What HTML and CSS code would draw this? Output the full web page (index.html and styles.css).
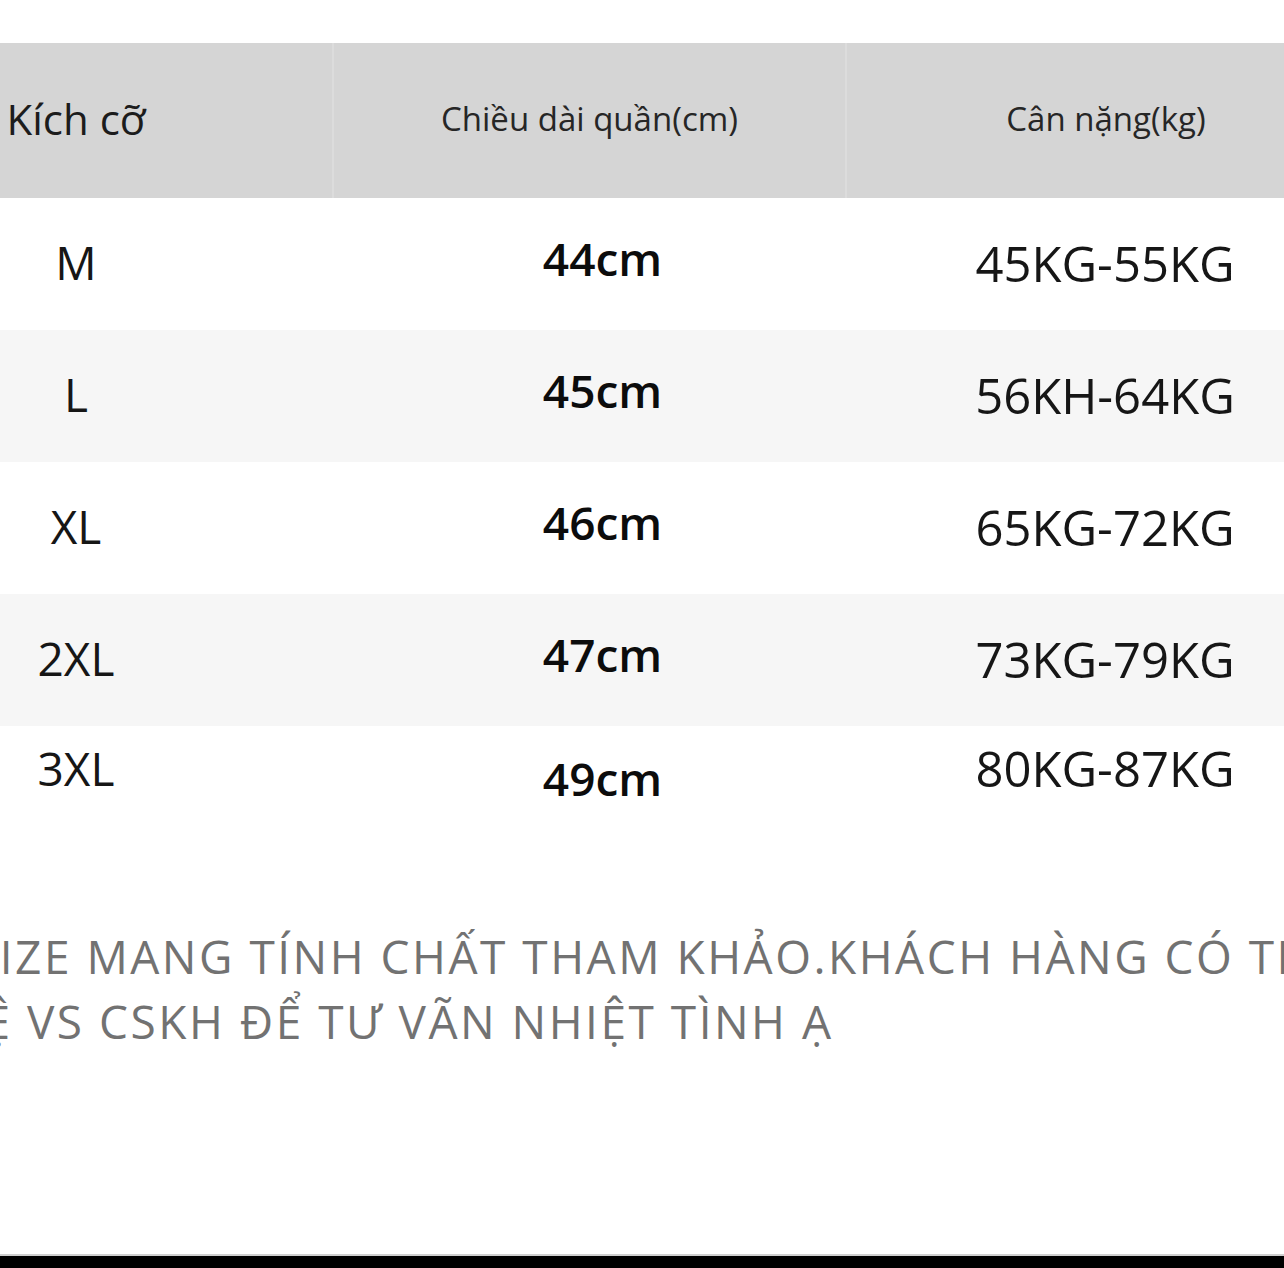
FILE: index.html
```html
<!DOCTYPE html>
<html lang="vi">
<head>
<meta charset="utf-8">
<title>Bảng size</title>
<link rel="stylesheet" href="styles.css">
</head>
<body>
<div class="page">
  <div class="table-clip">
    <div class="table">
      <div class="row head">
        <div class="cell c1 h-main">Kích cỡ</div>
        <div class="cell c2 h-sub">Chiều dài quần(cm)</div>
        <div class="cell c3 h-sub">Cân nặng(kg)</div>
      </div>
      <div class="row">
        <div class="cell c1 size">M</div>
        <div class="cell c2 len">44cm</div>
        <div class="cell c3 kg">45KG-55KG</div>
      </div>
      <div class="row alt">
        <div class="cell c1 size">L</div>
        <div class="cell c2 len">45cm</div>
        <div class="cell c3 kg">56KH-64KG</div>
      </div>
      <div class="row">
        <div class="cell c1 size">XL</div>
        <div class="cell c2 len">46cm</div>
        <div class="cell c3 kg">65KG-72KG</div>
      </div>
      <div class="row alt">
        <div class="cell c1 size">2XL</div>
        <div class="cell c2 len">47cm</div>
        <div class="cell c3 kg">73KG-79KG</div>
      </div>
      <div class="row last">
        <div class="cell c1 size up">3XL</div>
        <div class="cell c2 len down">49cm</div>
        <div class="cell c3 kg up">80KG-87KG</div>
      </div>
    </div>
  </div>
  <div class="note">
    <div class="note-line l1">SIZE MANG TÍNH CHẤT THAM KHẢO.KHÁCH HÀNG CÓ THỂ LIÊN</div>
    <div class="note-line l2">HỆ VS CSKH ĐỂ TƯ VÃN NHIỆT TÌNH Ạ</div>
  </div>
  <div class="bottom-bar"></div>
</div>
</body>
</html>
```
FILE: styles.css
```css
html, body {
  margin: 0;
  padding: 0;
  background: #ffffff;
}

.page {
  width: 1284px;
  height: 1268px;
  display: flex;
  flex-direction: column;
  overflow: hidden;
  font-family: "Open Sans", "Noto Sans", "Liberation Sans", sans-serif;
  color: #141414;
}

.table-clip {
  margin-top: 43px;
  width: 1284px;
  overflow: hidden;
}

.table {
  width: 1545px;
  margin-left: -180px;
  display: flex;
  flex-direction: column;
}

.row {
  display: grid;
  grid-template-columns: 512px 513px 520px;
  height: 132px;
  background: #ffffff;
}

.row.alt {
  background: #f6f6f6;
}

.row.head {
  height: 155px;
  background: #d5d5d5;
}

.cell {
  display: flex;
  align-items: center;
  justify-content: center;
  white-space: nowrap;
}

.head .c2,
.head .c3 {
  border-left: 2px solid #dcdcdc;
}

.h-main {
  font-size: 42px;
  color: #1c1c1c;
  padding-bottom: 4px;
}

.h-sub {
  font-size: 33px;
  color: #262626;
  padding-bottom: 4px;
}

.size {
  font-size: 46px;
  color: #161616;
  padding-bottom: 4px;
}

.len {
  font-size: 46px;
  font-weight: 600;
  color: #0c0c0c;
  padding-left: 28px;
  padding-bottom: 12px;
}

.kg {
  font-size: 49px;
  color: #161616;
  padding-bottom: 2px;
}

.row.last {
  height: 118px;
}

.row.last .up {
  padding-bottom: 34px;
}

.row.last .down {
  padding-top: 0;
  padding-bottom: 14px;
}

.note {
  margin-top: 80px;
  color: #727272;
  font-size: 46px;
  letter-spacing: 2.5px;
}

.note-line {
  white-space: nowrap;
  height: 65px;
  line-height: 65px;
}

.note-line.l1 {
  margin-left: -28px;
}

.note-line.l2 {
  margin-left: -52px;
}

.bottom-bar {
  margin-top: auto;
  height: 12px;
  background: #000000;
  border-top: 2px solid #cfcfcf;
}
```
